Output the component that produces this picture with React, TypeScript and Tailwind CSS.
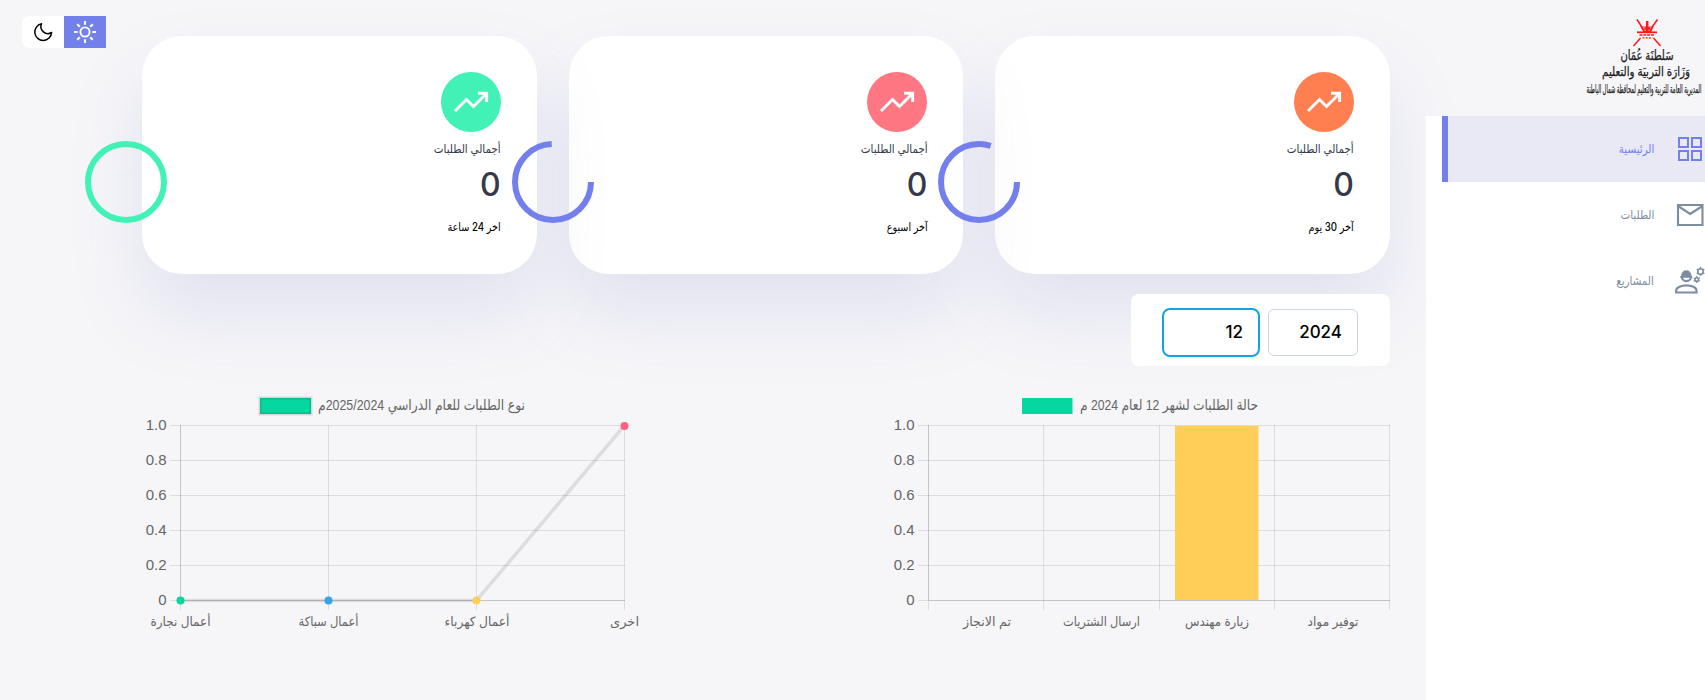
import React from "react";

const FONT = "font-['Inter','DejaVu_Sans',sans-serif]";
const AR = "'Liberation Sans','DejaVu Sans',sans-serif";

type TextProps = { x: number; y: number; w: number; size?: number; children: string };

function ChartText({ x, y, w, size = 13, children }: TextProps) {
  return (
    <text x={x} y={y} textAnchor="middle" direction="rtl" fontSize={size} fill="#666" fontFamily={AR} textLength={w} lengthAdjust="spacingAndGlyphs">
      {children}
    </text>
  );
}

function YAxis({ x }: { x: number }) {
  return (
    <>
      {["1.0", "0.8", "0.6", "0.4", "0.2", "0"].map((t, i) => (
        <text key={t} x={x} y={50 + i * 35} direction="ltr" textAnchor="end" fontSize="15" fill="#666" fontFamily={AR}>
          {t}
        </text>
      ))}
    </>
  );
}

function BarChart() {
  return (
    <svg width="510" height="260" className="block overflow-visible">
      <rect x="142" y="18" width="50.5" height="16" fill="#06d6a0" />
      <ChartText x={289} y={29.5} w={178} size={15}>حالة الطلبات لشهر 12 لعام 2024 م</ChartText>
      <YAxis x={34.500} />
      <g stroke="#000" strokeOpacity="0.1">
        {[45.5, 80.5, 115.5, 150.5, 185.5].map((y) => (
          <path key={y} d={`M38 ${y}H510`} />
        ))}
        <path d="M38 220.5H48" />
        {[163.5, 279.5, 394.5, 509.5].map((x) => (
          <path key={x} d={`M${x} 45V230`} />
        ))}
        <path d="M48.5 221V230" />
        <path d="M48.5 45V220.5H510" fill="none" strokeOpacity="0.2" />
      </g>
      <rect x="295" y="46" width="83.5" height="174" fill="#ffce56" />
      <ChartText x={107} y={245.5} w={48}>تم الانجاز</ChartText>
      <ChartText x={221.5} y={245.5} w={77}>ارسال الشتريات</ChartText>
      <ChartText x={337} y={245.5} w={64}>زيارة مهندس</ChartText>
      <ChartText x={453} y={245.5} w={51}>توفير مواد</ChartText>
    </svg>
  );
}

function LineChart() {
  return (
    <svg width="510" height="260" className="block overflow-visible">
      <rect x="118" y="18" width="51" height="16" fill="#06d6a0" stroke="#000" strokeOpacity="0.12" strokeWidth="3" />
      <ChartText x={279.5} y={29.5} w={207} size={15}>نوع الطلبات للعام الدراسي 2025/2024م</ChartText>
      <YAxis x={24.5} />
      <g stroke="#000" strokeOpacity="0.1">
        {[45.5, 80.5, 115.5, 150.5, 185.5].map((y) => (
          <path key={y} d={`M28 ${y}H483`} />
        ))}
        <path d="M28 220.5H38" />
        {[186.5, 334.5, 482.5].map((x) => (
          <path key={x} d={`M${x} 45V230`} />
        ))}
        <path d="M38.5 221V230" />
        <path d="M38.5 45V220.5H483" fill="none" strokeOpacity="0.2" />
      </g>
      <path d="M38.5 220.5H334.5L482.5 45.5" fill="none" stroke="#000" strokeOpacity="0.1" strokeWidth="3.5" />
      <circle cx="38.5" cy="220.5" r="4" fill="#06d6a0" />
      <circle cx="186.5" cy="220.5" r="4" fill="#36a2eb" />
      <circle cx="334.5" cy="220.5" r="4" fill="#ffce56" />
      <circle cx="482.5" cy="46" r="4" fill="#ff6384" />
      <ChartText x={38.5} y={245.5} w={60}>أعمال نجارة</ChartText>
      <ChartText x={186.5} y={245.5} w={60}>أعمال سباكة</ChartText>
      <ChartText x={335} y={245.5} w={65}>أعمال كهرباء</ChartText>
      <ChartText x={482.5} y={245.5} w={29}>اخرى</ChartText>
    </svg>
  );
}

type CardProps = { bg: string; ring: string; arc: number; period: React.ReactNode };

function Card({ bg, ring, arc, period }: CardProps) {
  return (
    <article className="relative h-[238px] flex-1 rounded-[40px] bg-white px-9 pt-9 text-right shadow-[0_40px_70px_rgba(132,139,200,0.18)]">
      <div className={`size-15 rounded-full text-white ${bg}`}>
        <svg width="60" height="60" fill="none" stroke="currentColor" strokeWidth="2.9">
          <path d="M14 39 25.5 27.5 32.5 34.5 45 22M37 21.3H45.7V30" />
        </svg>
      </div>
      <h3 className="mt-[7px] h-6 origin-right scale-x-[0.86] text-[12px] leading-5 whitespace-nowrap text-[#363949]">أجمالي الطلبات</h3>
      <h1 className="-mt-[3px] text-[32px] leading-[50px] font-medium text-[#363949]">0</h1>
      <small className="mt-2 block origin-right scale-x-[0.84] text-[11.5px] leading-[18px] font-medium text-black">{period}</small>
      <svg width="84" height="84" viewBox="-42 -42 84 84" className="absolute top-26 -left-[58px] z-10">
        <circle r="38" fill="none" stroke={ring} strokeWidth="6" pathLength={360} strokeDasharray={`${arc} 360`} />
      </svg>
    </article>
  );
}

function Logo() {
  return (
    <div className="flex h-[116px] w-[143px] pt-[14px]">
      <svg width="143" height="90" className="block">
        <g stroke="#ff1a1a" fill="none" transform="translate(21.5 3)">
          <path d="M53.500 2.500 58 9.500M74 2.500 69 9.500M57 21 50 29M70 21 77 29" strokeWidth="1.5" />
          <path d="M57.500 9 61 15H66.500L69.500 9" strokeWidth="1.800" fill="#ff1a1a" fillOpacity="0.45" />
          <path d="M53.500 15.300H73.500" strokeWidth="1.800" />
          <path d="M56 18H71" strokeWidth="1.6" strokeDasharray="3 .8" />
          <path d="M59 20.800H69" strokeWidth="1.3" strokeDasharray="2 1.200" />
          <path d="M63.700 4V15M61 11.500H66.500" strokeWidth="2.400" />
        </g>
        <g fill="#1c1c1c" stroke="#1c1c1c" strokeWidth="0.25" textAnchor="middle" direction="rtl" fontFamily={AR}>
          <text x="85" y="45.500" fontSize="14" textLength="53" lengthAdjust="spacingAndGlyphs">سَلطنَة عُمَان</text>
          <text x="84" y="62" fontSize="13" textLength="88" lengthAdjust="spacingAndGlyphs">وَزَارَة التربيَة والتعليم</text>
          <text x="82" y="79" fontSize="12" textLength="115" lengthAdjust="spacingAndGlyphs">المديرية العامة للتربية والتعليم لمحافظة شمال الباطنة</text>
        </g>
      </svg>
    </div>
  );
}

function GridIcon() {
  return (
    <svg width="30" height="30" fill="none" stroke="currentColor" strokeWidth="2" className="shrink-0">
      <path d="M4 4H13V13H4ZM17 4H26V13H17ZM4 17H13V26H4ZM17 17H26V26H17Z" />
    </svg>
  );
}

function MailIcon() {
  return (
    <svg width="30" height="30" fill="none" stroke="currentColor" strokeWidth="2.1" className="shrink-0">
      <path d="M3 5H27.500V25H3ZM3 6 15.200 14 27.500 6" />
    </svg>
  );
}

function Gear({ x, y, r }: { x: number; y: number; r: number }) {
  return (
    <g transform={`translate(${x} ${y})`} fill="none" stroke="currentColor">
      <circle r={r} strokeWidth="1.6" />
      <circle r={r + 1.1} strokeWidth="1.3" pathLength={60} strokeDasharray="4 6" strokeDashoffset="2" transform="rotate(30)" />
    </g>
  );
}

function EngineerIcon() {
  return (
    <svg width="30" height="30" fill="none" stroke="currentColor" className="shrink-0 overflow-visible">
      <path d="M1.200 26.500V24.500C1.200 21.500 6.500 19.300 11.500 19.300S21.500 21.500 21.500 24.500V26.500Z" strokeWidth="2.200" />
      <path d="M6.200 10C6.200 6.500 8.500 4.500 11.300 4.500S16.500 6.500 16.500 10H17.200V11.800H5.300V10Z" fill="currentColor" stroke="none" />
      <path d="M6.800 10.500A4.600 4.600 0 0 0 16 10.500" strokeWidth="2.200" />
      <path d="M9.800 4.400V7M12.900 4.400V7" strokeWidth="1.4" />
      <Gear x={25.5} y={5.5} r={2.7} />
      <Gear x={21.8} y={13.5} r={1.8} />
    </svg>
  );
}

function SunIcon() {
  return (
    <svg width="24" height="24" viewBox="-12 -12 24 24" fill="none" stroke="currentColor">
      <circle r="4.600" strokeWidth="1.900" />
      {[0, 45, 90, 135, 180, 225, 270, 315].map((a) => (
        <path key={a} d="M0 -7.300V-11" strokeWidth="2.100" transform={`rotate(${a})`} />
      ))}
    </svg>
  );
}

function MoonIcon() {
  return (
    <svg width="20" height="20" fill="none" stroke="currentColor" strokeWidth="1.5" strokeLinejoin="round">
      <path d="M8.500 1.800A8.400 8.400 0 1 0 18.600 10.500A7 7 0 0 1 8.500 1.800Z" />
    </svg>
  );
}

function NavLabel({ children }: { children: string }) {
  return <span className="mr-[21px] origin-right scale-x-[0.86] pb-px text-[12px]">{children}</span>;
}

export default function App() {
  return (
    <div dir="rtl" className={`flex h-[700px] w-full overflow-hidden bg-[#f6f6f9] ${FONT}`}>
      <aside className="flex w-[279px] shrink-0 flex-col">
        <Logo />
        <nav className="relative z-10 flex-1 bg-white pl-4 text-[#7d8da1]">
          <a className="flex h-[66px] items-center border-l-6 border-[#7380ec] bg-[#e9e9f6] text-[#7380ec]">
            <GridIcon />
            <NavLabel>الرئيسية</NavLabel>
          </a>
          <a className="flex h-[66px] items-center">
            <MailIcon />
            <NavLabel>الطلبات</NavLabel>
          </a>
          <a className="flex h-[66px] items-center">
            <EngineerIcon />
            <NavLabel>المشاريع</NavLabel>
          </a>
        </nav>
      </aside>

      <main className="mr-9 w-[1248px] shrink-0 pt-9">
        <section className="flex gap-8">
          <Card bg="bg-[#ff7f50]" ring="#7380ec" arc={288} period="آخر 30 يوم" />
          <Card bg="bg-[#ff7782]" ring="#7380ec" arc={268} period="آخر اسبوع" />
          <Card bg="bg-[#41f1b6]" ring="#41f1b6" arc={360} period="اخر 24 ساعة" />
        </section>

        <form className="relative mt-5 flex h-18 w-[259px] items-center gap-2 rounded-lg bg-white pt-[5px] pr-8 text-[17px] font-medium text-black">
          <div className="flex h-[47px] w-[90px] items-center rounded-md border border-[#cbd5e1] pr-[15px]">2024</div>
          <div className="flex h-[49px] w-[98px] items-center rounded-lg border-2 border-[#0ea5e9] pr-[15px]">12</div>
        </form>

        <section className="mt-[14px] flex justify-between">
          <BarChart />
          <div dir="ltr">
            <LineChart />
          </div>
        </section>
      </main>

      <div className="flex flex-1 justify-end pt-4 pl-[22px]">
        <div className="flex h-8 w-[84px] overflow-hidden rounded-l-lg bg-white">
          <span className="flex w-[42px] items-center justify-center bg-[#7380ec] text-white">
            <SunIcon />
          </span>
          <span className="flex w-[42px] items-center justify-center text-black">
            <MoonIcon />
          </span>
        </div>
      </div>
    </div>
  );
}
